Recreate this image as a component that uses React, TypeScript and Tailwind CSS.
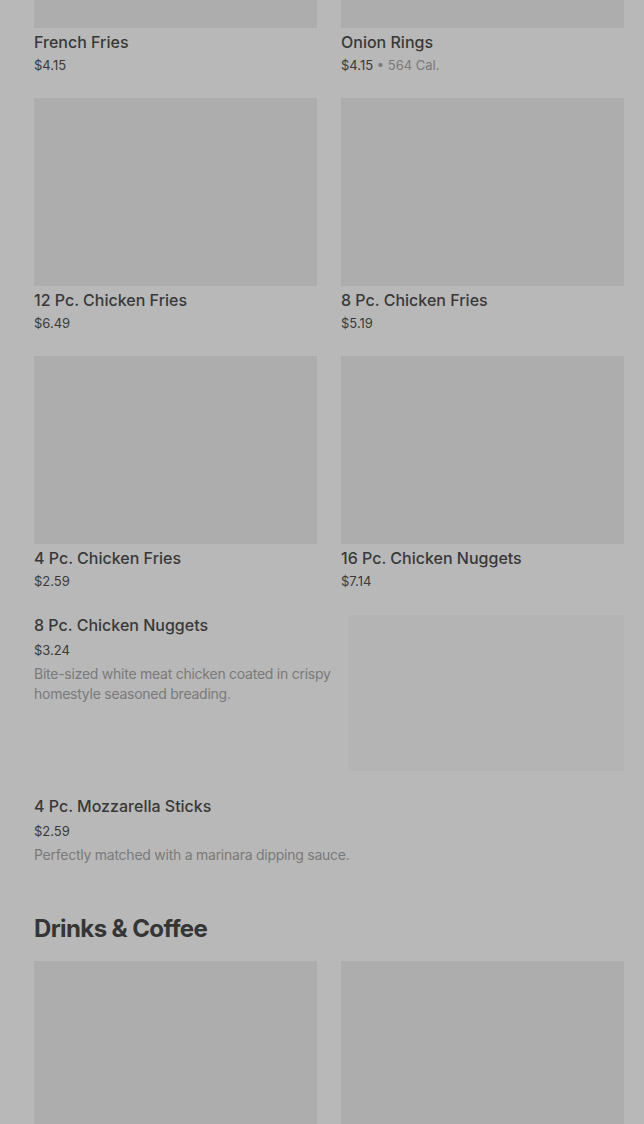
const gridTop = [
  { name: "French Fries", price: "$4.15" },
  { name: "Onion Rings", price: "$4.15", cal: "564 Cal." },
  { name: "12 Pc. Chicken Fries", price: "$6.49" },
  { name: "8 Pc. Chicken Fries", price: "$5.19" },
  { name: "4 Pc. Chicken Fries", price: "$2.59" },
  { name: "16 Pc. Chicken Nuggets", price: "$7.14" },
];

const listItems = [
  {
    name: "8 Pc. Chicken Nuggets",
    price: "$3.24",
    desc: "Bite-sized white meat chicken coated in crispy homestyle seasoned breading.",
    image: true,
  },
  {
    name: "4 Pc. Mozzarella Sticks",
    price: "$2.59",
    desc: "Perfectly matched with a marinara dipping sauce.",
    image: false,
  },
];

function GridCard({ name, price, cal }: { name: string; price: string; cal?: string }) {
  return (
    <div className="flex flex-col">
      <div className="h-[188px] w-full bg-[#adadad]" />
      <div className="mt-[2px] text-base leading-6 font-medium text-[#383838]">{name}</div>
      <div className="mt-px text-[13px] leading-5 text-[#3a3a3a]">
        {price}
        {cal && <span className="text-[#7a7a7a]"> • {cal}</span>}
      </div>
    </div>
  );
}

export default function App() {
  return (
    <div
      className="h-[1124px] w-full overflow-hidden bg-[#b8b8b8]"
      style={{ fontFamily: "Inter, 'Noto Sans', sans-serif" }}
    >
      <div className="-mt-[160px] pl-[34px] pr-[20px]">
        {/* Sides grid */}
        <div className="grid grid-cols-2 gap-x-6 gap-y-[23px]">
          {gridTop.map((item) => (
            <GridCard key={item.name} {...item} />
          ))}
        </div>

        {/* List items */}
        <div className="mt-[24px] flex flex-col gap-[25px]">
          {listItems.map((item) => (
            <div key={item.name} className="flex gap-3">
              <div className="flex-1 min-w-0">
                <div className="text-base leading-5 font-medium text-[#383838]">{item.name}</div>
                <div className="mt-[5px] text-[13px] leading-5 text-[#3a3a3a]">{item.price}</div>
                <div className="mt-1 text-sm leading-5 tracking-[-0.25px] text-[#7a7a7a]">
                  {item.desc}
                </div>
              </div>
              {item.image && <div className="h-[156px] w-[276px] shrink-0 bg-[#b4b4b4]" />}
            </div>
          ))}
        </div>

        {/* Drinks */}
        <h2 className="mt-12 text-2xl leading-8 font-bold tracking-tight text-[#353535]">
          Drinks &amp; Coffee
        </h2>
        <div className="mt-[16px] grid grid-cols-2 gap-x-6 gap-y-[23px]">
          <GridCard name="" price="" />
          <GridCard name="" price="" />
        </div>
      </div>
    </div>
  );
}
